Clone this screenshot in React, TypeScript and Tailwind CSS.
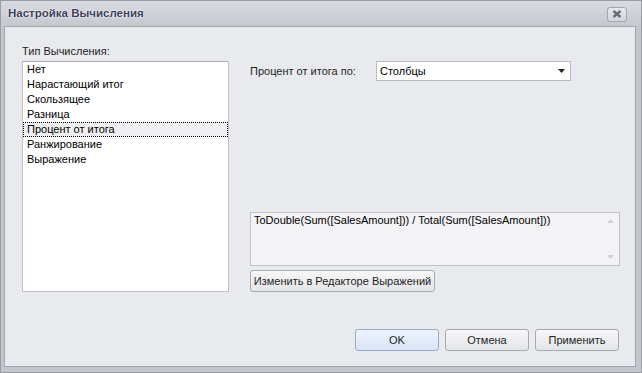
import React from "react";

const items = [
  "Нет",
  "Нарастающий итог",
  "Скользящее",
  "Разница",
  "Процент от итога",
  "Ранжирование",
  "Выражение",
];

const font = { fontFamily: '"Liberation Sans", Arial, sans-serif' };

export default function App() {
  return (
    <div
      className="w-[642px] h-[373px] flex flex-col bg-[#c4c6cd] border border-[#9a9ca5] text-[11px] text-black"
      style={font}
    >
      {/* Title bar */}
      <div className="h-[25px] flex items-center justify-between pl-[7px] pr-[14px] bg-gradient-to-b from-[#dadbe0] to-[#c7c8ce]">
        <span
          className="font-bold text-[11.5px] text-[#39405a]"
          style={{ textShadow: "0 0 2px #ffffff, 0 0 1px #ffffff" }}
        >
          Настройка Вычисления
        </span>
        <div className="w-[20px] h-[15px] mt-[1px] rounded-[3px] border border-[#a4a6ae] bg-gradient-to-b from-[#e6e7ea] to-[#d3d4d9] flex items-center justify-center">
          <svg width="10" height="8" viewBox="0 0 10 8">
            <path d="M1.5 1 L8.5 7 M8.5 1 L1.5 7" stroke="#676a74" strokeWidth="2.4" />
          </svg>
        </div>
      </div>

      {/* Frame */}
      <div className="flex-1 flex pl-[3px] pr-[5px] pb-[5px]">
        <div className="flex-1 flex flex-col bg-[#e9eaee] border border-[#a3a6ae]">
          <div className="flex-1 flex pt-[18px] pl-[17px]">
            {/* Left column */}
            <div className="w-[207px] flex flex-col">
              <div className="h-[13px] leading-[13px] mb-[3px] text-[#1e1e1e]">Тип Вычисления:</div>
              <div className="h-[231px] bg-white border border-[#c2c4ca] border-t-[#a8aab0] pt-0">
                {items.map((it, i) => (
                  <div
                    key={it}
                    className={
                      i === 4
                        ? "h-[15px] leading-[13px] pl-[3px] border border-dotted border-black bg-[#efeff1]"
                        : "h-[15px] leading-[15px] pl-[4px]"
                    }
                  >
                    {it}
                  </div>
                ))}
              </div>
            </div>

            {/* Right column */}
            <div className="ml-[21px] flex flex-col">
              <div className="mt-[16px] h-[20px] flex items-center">
                <div className="w-[126px] text-[#1e1e1e]">Процент от итога по:</div>
                <div className="w-[195px] h-[20px] bg-white border border-[#b9bcc4] flex items-center justify-between pl-[3px] pr-[5px]">
                  <span>Столбцы</span>
                  <svg width="7" height="4" viewBox="0 0 7 4">
                    <path d="M0 0 L7 0 L3.5 4 Z" fill="#222" />
                  </svg>
                </div>
              </div>
              <div className="mt-[131px] w-[370px] h-[54px] bg-[#f3f3f5] border border-[#bfc1c8] flex justify-between">
                <div className="pl-[3px] pt-[1px] leading-[13px]">
                  ToDouble(Sum([SalesAmount])) / Total(Sum([SalesAmount]))
                </div>
                <div className="w-[17px] flex flex-col justify-between items-center py-[6px]">
                  <svg width="7" height="4" viewBox="0 0 7 4">
                    <path d="M0 4 L7 4 L3.5 0 Z" fill="#cfd0d4" />
                  </svg>
                  <svg width="7" height="4" viewBox="0 0 7 4">
                    <path d="M0 0 L7 0 L3.5 4 Z" fill="#cfd0d4" />
                  </svg>
                </div>
              </div>
              <button className="mt-[4px] w-[185px] h-[22px] rounded-[3px] border border-[#a8aab1] bg-gradient-to-b from-[#f7f7f8] to-[#e4e5e8] text-[11px] text-[#1e1e1e] flex items-center justify-center">
                Изменить в Редакторе Выражений
              </button>
            </div>
          </div>

          {/* Bottom buttons */}
          <div className="flex justify-end gap-[6px] pr-[16px] pb-[15px]">
            <button className="w-[84px] h-[22px] rounded-[3px] border border-[#9fabc6] bg-gradient-to-b from-[#eef3fd] to-[#d9e4f8] text-[11px] text-[#1e1e1e]">
              OK
            </button>
            <button className="w-[84px] h-[22px] rounded-[3px] border border-[#a8aab1] bg-gradient-to-b from-[#f7f7f8] to-[#e4e5e8] text-[11px] text-[#1e1e1e]">
              Отмена
            </button>
            <button className="w-[84px] h-[22px] rounded-[3px] border border-[#a8aab1] bg-gradient-to-b from-[#f7f7f8] to-[#e4e5e8] text-[11px] text-[#1e1e1e]">
              Применить
            </button>
          </div>
        </div>
      </div>
    </div>
  );
}
